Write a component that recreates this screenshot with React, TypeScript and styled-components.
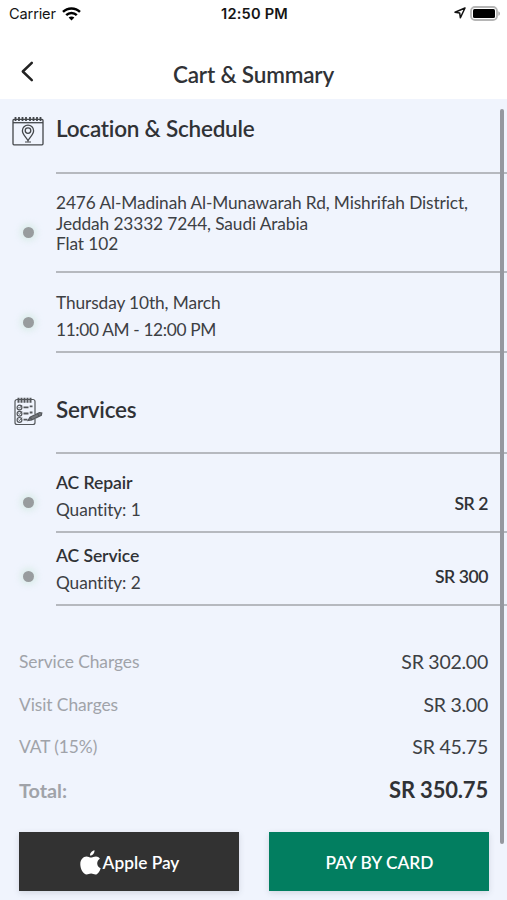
import React from 'react';
import styled, { createGlobalStyle } from 'styled-components';

const GlobalStyle = createGlobalStyle`
  * { box-sizing: border-box; }
  body {
    margin: 0;
    background: #f0f4fd;
    font-family: Lato, "Open Sans", sans-serif;
    font-variant-ligatures: none;
    color: #3d4044;
  }
`;

const Screen = styled.div`
  position: relative;
  width: 507px;
  height: 900px;
  overflow: hidden;
  background: #f0f4fd;
`;

const StatusBar = styled.div`
  display: grid;
  grid-template-columns: 1fr auto 1fr;
  align-items: center;
  height: 28px;
  padding: 0 7px 0 9px;
  background: #fff;
  color: #151515;
  font-family: Inter, sans-serif;
  font-size: 14.6px;
`;

const Carrier = styled.div`
  display: flex;
  align-items: center;
  gap: 6px;
  letter-spacing: -0.15px;
`;

const Clock = styled.div`
  font-weight: 600;
  letter-spacing: 0.2px;
`;

const StatusIcons = styled.div`
  display: flex;
  align-items: center;
  justify-content: flex-end;
  gap: 4px;
  margin-right: -1px;
  padding-bottom: 2px;
`;

const Header = styled.header`
  display: grid;
  grid-template-columns: 56px 1fr 56px;
  align-items: center;
  height: 71px;
  padding-top: 22px;
  background: #fff;
`;

const BackButton = styled.button`
  display: flex;
  padding: 0 0 7px 20px;
  border: 0;
  background: none;
`;

const PageTitle = styled.h1`
  margin: 0;
  text-align: center;
  font-size: 22.5px;
  line-height: 26px;
  font-weight: 600;
  letter-spacing: -0.17px;
  color: #303236;
`;

const SectionHeader = styled.div<{ $height: number; $top: number }>`
  display: grid;
  grid-template-columns: 56px 1fr;
  height: ${(p) => p.$height}px;
  padding-top: ${(p) => p.$top}px;
`;

const SectionIcon = styled.div`
  display: flex;
  align-items: flex-start;
  justify-content: center;
  padding-top: 1px;
`;

const SectionTitle = styled.h2`
  margin: 0;
  font-size: 22.5px;
  line-height: 28px;
  font-weight: 600;
  letter-spacing: -0.22px;
  color: #303236;
`;

const Row = styled.div<{ $height: number }>`
  display: grid;
  grid-template-columns: 56px 1fr;
  height: ${(p) => p.$height}px;
`;

const DotCell = styled.div<{ $top: number }>`
  display: flex;
  align-items: flex-start;
  justify-content: center;
  padding-top: ${(p) => p.$top}px;
`;

const Dot = styled.span`
  width: 11px;
  height: 11px;
  border-radius: 50%;
  background: #989c9e;
  box-shadow: 0 0 6px 3px rgba(205, 232, 222, 0.6);
`;

const RowBody = styled.div<{ $first?: boolean; $top: number }>`
  display: flex;
  align-items: flex-start;
  justify-content: space-between;
  padding: ${(p) => p.$top}px 19px 0 0;
  border-top: ${(p) => (p.$first ? '2px solid #b6b9bf' : '0')};
  border-bottom: 2px solid #b6b9bf;
`;

const Lines = styled.div<{ $leading: number }>`
  font-size: 17.3px;
  line-height: ${(p) => p.$leading}px;
  letter-spacing: -0.1px;
  white-space: nowrap;
`;

const TimeRange = styled.div`
  letter-spacing: -0.35px;
`;

const ServiceName = styled.div`
  font-size: 17.6px;
  font-weight: 600;
  letter-spacing: -0.12px;
  color: #303236;
`;

const Price = styled.div`
  padding-top: 25px;
  font-size: 17.6px;
  line-height: 20px;
  font-weight: 600;
  letter-spacing: -0.45px;
  color: #303236;
`;

const Totals = styled.dl`
  margin: 0;
  padding: 34px 19px 0;
`;

const TotalRow = styled.div<{ $strong?: boolean }>`
  display: flex;
  align-items: center;
  justify-content: space-between;
  height: 42.8px;
  font-weight: ${(p) => (p.$strong ? 700 : 400)};

  dt {
    color: #a0a3a9;
    font-size: ${(p) => (p.$strong ? 19.8 : 17.4)}px;
    letter-spacing: ${(p) => (p.$strong ? 0 : -0.08)}px;
  }
  dd {
    margin: 0;
    color: ${(p) => (p.$strong ? '#303236' : '#3d4044')};
    font-size: ${(p) => (p.$strong ? 22 : 19.5)}px;
    letter-spacing: ${(p) => (p.$strong ? -0.18 : -0.25)}px;
  }
`;

const Actions = styled.div`
  display: grid;
  grid-template-columns: 1fr 1fr;
  gap: 30px;
  padding: 21px 18px 0 19px;
`;

const PayButton = styled.button<{ $tone: string }>`
  display: flex;
  align-items: center;
  justify-content: center;
  gap: 2px;
  height: 59px;
  padding: 1px 0 0 1px;
  border: 0;
  background: ${(p) => p.$tone};
  color: #fff;
  font: 600 17.3px Lato, sans-serif;
  box-shadow: 0 2px 6px rgba(60, 70, 90, 0.16);
`;

const ScrollThumb = styled.div`
  position: absolute;
  top: 109px;
  right: 3px;
  width: 4px;
  height: 735px;
  border-radius: 2px;
  background: #95989f;
`;

const WifiIcon = () => (
  <svg width="19" height="14" viewBox="0 0 19 14" fill="none" stroke="#000" strokeWidth="2.4">
    <path d="M1 4.9C5.6.3 13.4.3 18 4.9" />
    <path d="M4.2 8.1c2.9-2.9 7.7-2.9 10.6 0" />
    <path d="M9.5 13.5 6.6 10.6c1.6-1.5 4.2-1.5 5.8 0Z" fill="#000" stroke="none" />
  </svg>
);

const LocationArrow = () => (
  <svg width="12" height="12" viewBox="0 0 12 12" fill="none" stroke="#111" strokeWidth="1.5" strokeLinejoin="round">
    <path d="M11 1 1 5.3l4.7.8.7 4.7Z" />
  </svg>
);

const BatteryIcon = () => (
  <svg width="31" height="15" viewBox="0 0 31 15">
    <rect x="1" y="1" width="26" height="13" rx="4" fill="#fff" stroke="#b5b5b5" strokeWidth="1.8" />
    <rect x="3" y="3" width="22" height="9" rx="1.5" fill="#000" />
    <path d="M28.4 5.2c2 .8 2 3.8 0 4.6Z" fill="#a5a5a5" />
  </svg>
);

const ChevronIcon = () => (
  <svg width="14" height="21" viewBox="0 0 14 21" fill="none" stroke="#222" strokeWidth="2.5" strokeLinecap="round" strokeLinejoin="round">
    <path d="m11.8 1.8-9 8.7 9 8.7" />
  </svg>
);

const CalendarPinIcon = () => (
  <svg width="32" height="30" viewBox="0 0 32 30" fill="none" stroke="#44474b" strokeWidth="1.3">
    <rect x="1" y="3.4" width="30" height="25.4" rx="1" />
    <path d="M1 6.7h30" />
    <path d="M3.5 1v4M7 1v4M10.5 1v4M14 1v4M18 1v4M21.5 1v4M25 1v4M28.5 1v4" strokeWidth="1.8" />
    <path d="M16 24.8c-1.3-3.2-5.6-6.2-5.6-10.1a5.6 5.6 0 0 1 11.2 0c0 3.9-4.3 6.9-5.6 10.1Z" />
    <circle cx="16" cy="14.6" r="2.8" />
    <path d="M13 26h6" strokeWidth="1" />
  </svg>
);

const ChecklistIcon = () => (
  <svg width="29" height="29" viewBox="0 0 29 29" fill="none" stroke="#54575b" strokeWidth="1.2">
    <path d="M21 17V4.5a2 2 0 0 0-2-2H3a2 2 0 0 0-2 2v21a2 2 0 0 0 2 2h16a2 2 0 0 0 2-2V22" />
    <path d="M4.5.8v5M7.5.8v5M10.5.8v5M13.5.8v5M16.5.8v5" strokeWidth="2" />
    <circle cx="5.5" cy="10.5" r="2.4" />
    <circle cx="5.5" cy="16.7" r="2.4" />
    <circle cx="5.5" cy="22.9" r="2.4" />
    <path d="m4.5 10.2 1 1 2.5-3M4.5 16.4l1 1 2.5-3M4.5 22.6l1 1 2.5-3" strokeWidth=".9" />
    <path d="M9.5 10.3h5m1.2-1h2.8M9.5 16.5h5m1.2-1h2.8M9.5 22.7h4" strokeWidth="1.8" />
    <path d="m14 23.5 2-3.3 9.5-4.7 2.3.4-.5 2.4-9.6 4.7Z" fill="#74777c" />
    <path d="m16 20.2 2 2.8m5.5-6.5 1.5 2.8" />
  </svg>
);

const AppleIcon = () => (
  <svg width="21" height="25" viewBox="0 0 21 25" fill="#fff">
    <path d="M14.5.2c.2 2.9-2 5.4-4.5 5.4C9.7 3.1 12 .6 14.5.2Z" />
    <path d="M19.9 8.7c-4 2.4-3.3 7.9.8 9.5-.9 2.8-2.9 6.3-5.2 6.3-1.7 0-2.6-1-4.4-1-1.9 0-2.9 1-4.5 1C3.5 24.5.3 19.2.3 14.3c0-4.7 2.9-7.8 6.2-7.8 1.8 0 3.1 1.1 4.5 1.1 1.2 0 2.8-1.2 5-1.2 1.4 0 3 .8 3.9 2.3Z" />
  </svg>
);

const address = ['2476 Al-Madinah Al-Munawarah Rd, Mishrifah District,', 'Jeddah 23332 7244, Saudi Arabia', 'Flat 102'];

const services = [
  { name: 'AC Repair', quantity: 1, price: 'SR 2', height: 81, top: 15, dotTop: 45 },
  { name: 'AC Service', quantity: 2, price: 'SR 300', height: 73, top: 9, dotTop: 38 },
];

const charges = [
  { label: 'Service Charges', amount: 'SR 302.00' },
  { label: 'Visit Charges', amount: 'SR 3.00' },
  { label: 'VAT (15%)', amount: 'SR 45.75' },
  { label: 'Total:', amount: 'SR 350.75', strong: true },
];

export default function App() {
  return (
    <Screen>
      <GlobalStyle />
      <StatusBar>
        <Carrier>
          Carrier <WifiIcon />
        </Carrier>
        <Clock>12:50 PM</Clock>
        <StatusIcons>
          <LocationArrow />
          <BatteryIcon />
        </StatusIcons>
      </StatusBar>
      <Header>
        <BackButton aria-label="Back">
          <ChevronIcon />
        </BackButton>
        <PageTitle>Cart &amp; Summary</PageTitle>
      </Header>

      <SectionHeader $height={73} $top={16}>
        <SectionIcon>
          <CalendarPinIcon />
        </SectionIcon>
        <SectionTitle>Location &amp; Schedule</SectionTitle>
      </SectionHeader>
      <Row $height={101}>
        <DotCell $top={55}>
          <Dot />
        </DotCell>
        <RowBody $first $top={19}>
          <Lines $leading={20.5}>
            {address.map((line) => (
              <div key={line}>{line}</div>
            ))}
          </Lines>
        </RowBody>
      </Row>
      <Row $height={80}>
        <DotCell $top={44}>
          <Dot />
        </DotCell>
        <RowBody $top={16}>
          <Lines $leading={27}>
            <div>Thursday 10th, March</div>
            <TimeRange>11:00 AM - 12:00 PM</TimeRange>
          </Lines>
        </RowBody>
      </Row>

      <SectionHeader $height={99} $top={43}>
        <SectionIcon>
          <ChecklistIcon />
        </SectionIcon>
        <SectionTitle>Services</SectionTitle>
      </SectionHeader>
      {services.map((service, i) => (
        <Row key={service.name} $height={service.height}>
          <DotCell $top={service.dotTop}>
            <Dot />
          </DotCell>
          <RowBody $first={i === 0} $top={service.top}>
            <Lines $leading={27}>
              <ServiceName>{service.name}</ServiceName>
              <div>Quantity: {service.quantity}</div>
            </Lines>
            <Price>{service.price}</Price>
          </RowBody>
        </Row>
      ))}

      <Totals>
        {charges.map((charge) => (
          <TotalRow key={charge.label} $strong={charge.strong}>
            <dt>{charge.label}</dt>
            <dd>{charge.amount}</dd>
          </TotalRow>
        ))}
      </Totals>
      <Actions>
        <PayButton $tone="#323232">
          <AppleIcon />
          Apple Pay
        </PayButton>
        <PayButton $tone="#027e60">PAY BY CARD</PayButton>
      </Actions>
      <ScrollThumb />
    </Screen>
  );
}
